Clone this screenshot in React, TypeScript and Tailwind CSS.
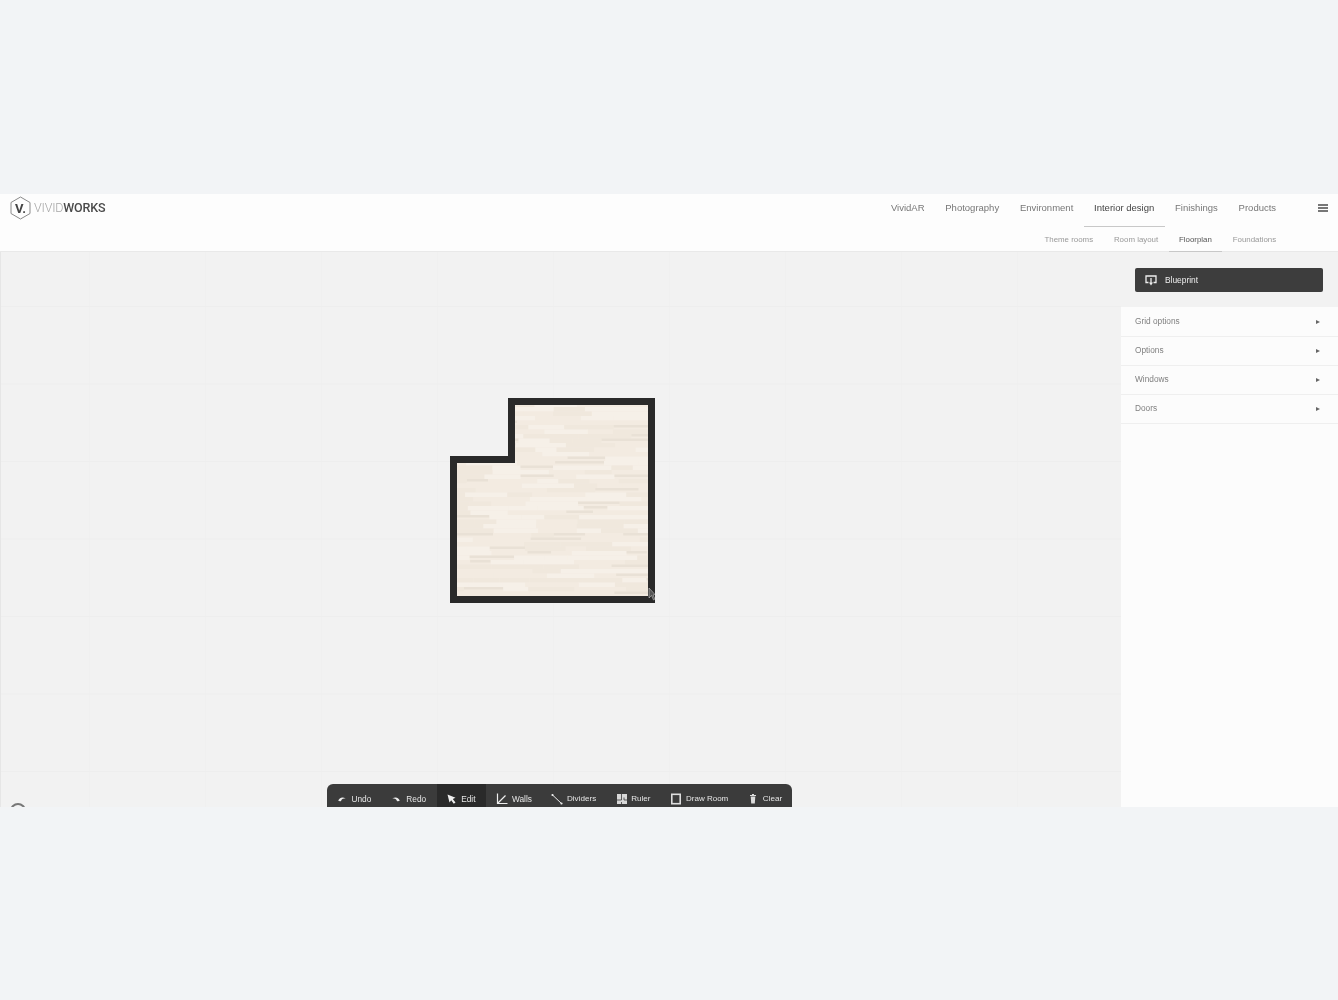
import { ReactNode } from "react";

const navItems = ["VividAR", "Photography", "Environment", "Interior design", "Finishings", "Products"];
const subItems = ["Theme rooms", "Room layout", "Floorplan", "Foundations"];
const panels = ["Grid options", "Options", "Windows", "Doors"];

function Logo() {
  return (
    <div className="flex items-center gap-[3px]">
      <svg width="21" height="24" viewBox="0 0 21 24">
        <path d="M10.5 1 L20 6.5 V17.5 L10.5 23 L1 17.5 V6.5 Z" fill="none" stroke="#8a8a8a" strokeWidth="1" strokeLinejoin="round" />
        <text x="10.5" y="17" textAnchor="middle" fontSize="13" fontWeight="700" fill="#444" fontFamily="Roboto, sans-serif">V.</text>
      </svg>
      <span className="text-[12.5px] tracking-[-0.2px] font-['Roboto',sans-serif] leading-none">
        <span className="font-light text-[#a5a5a5]">VIVID</span>
        <span className="font-medium text-[#4a4a4a]">WORKS</span>
      </span>
    </div>
  );
}

function Header() {
  return (
    <div className="h-[58px] shrink-0 bg-[#fdfdfd] border-b border-[#e9e9e9] flex flex-col">
      <div className="h-[33px] flex items-start justify-between pl-[10px] pr-[10px]">
        <div className="pt-[2px]"><Logo /></div>
        <div className="flex items-start">
          <div className="flex mr-[31.5px]">
            {navItems.map((item) => (
              <div
                key={item}
                className={
                  "h-[33px] px-[10.4px] pt-[8px] text-[9.5px] leading-[12px] border-b " +
                  (item === "Interior design" ? "text-[#444] border-[#c8c8c8]" : "text-[#777] border-transparent")
                }
              >
                {item}
              </div>
            ))}
          </div>
          <div className="mt-[10px] w-[10px] flex flex-col gap-[1.5px]">
            <div className="h-[1.5px] bg-[#777]" />
            <div className="h-[1.5px] bg-[#777]" />
            <div className="h-[1.5px] bg-[#777]" />
          </div>
        </div>
      </div>
      <div className="flex justify-end pr-[51.5px]">
        {subItems.map((item) => (
          <div
            key={item}
            className={
              "h-[25px] px-[10.4px] pt-[7px] text-[7.9px] leading-[11px] border-b " +
              (item === "Floorplan" ? "text-[#555] border-[#c8c8c8]" : "text-[#999] border-transparent")
            }
          >
            {item}
          </div>
        ))}
      </div>
    </div>
  );
}

function FloorPlan() {
  // streaks come from a small fixed sequence so the picture stays the same on every load
  const streaks: { x: number; y: number; w: number; h: number; c: string }[] = [];
  let seed = 7;
  const next = () => {
    seed = (seed * 9301 + 49297) % 233280;
    return seed / 233280;
  };
  for (let y = 0; y < 205; y += 4.5) {
    let x = -next() * 30;
    while (x < 205) {
      const w = 20 + next() * 40;
      const r = next();
      const c = r < 0.14 ? "#e9e1d6" : r < 0.4 ? "#f0e8dd" : r < 0.7 ? "#f6f0e8" : "#f3ebe1";
      streaks.push({ x, y, w, h: r < 0.14 ? 2.5 : 4.5, c });
      x += w;
    }
  }
  const outline = "M58 0 H205 V205 H0 V58 H58 Z";
  return (
    <svg width="205" height="205" viewBox="0 0 205 205" className="absolute left-[449px] top-[146px]">
      <defs>
        <clipPath id="room">
          <path d={outline} />
        </clipPath>
      </defs>
      <g clipPath="url(#room)">
        <rect width="205" height="205" fill="#f3ebe1" />
        {streaks.map((p, i) => (
          <rect key={i} x={p.x} y={p.y} width={p.w} height={p.h} fill={p.c} />
        ))}
      </g>
      <path d="M61.5 3.5 H201.5 V201.5 H3.5 V61.5 H61.5 Z" fill="none" stroke="#2a2a2a" strokeWidth="7" strokeLinejoin="miter" />
      <path d="M199 190 L199 200 L201.5 197.5 L203.5 202 L205 201 L203 197 L205 196.5 Z" fill="#555" stroke="#ddd" strokeWidth="0.5" />
    </svg>
  );
}

function ToolIcon({ children, w = 12 }: { children: ReactNode; w?: number }) {
  return (
    <svg width={w} height="12" viewBox={`0 0 ${w} 12`} fill="none" stroke="#eee" strokeWidth="1.2" className="shrink-0">
      {children}
    </svg>
  );
}

const tools: { label: string; cls: string; icon: ReactNode }[] = [
  {
    label: "Undo",
    cls: "gap-[6px] px-[10.5px] text-[8.3px]",
    icon: (
      <ToolIcon w={8}>
        <path d="M0.3 8 C1 4.5 5 3.5 7.7 5.8 C5 5.2 3.6 6 3 8.2 Z" fill="#eee" stroke="none" />
      </ToolIcon>
    ),
  },
  {
    label: "Redo",
    cls: "gap-[6px] px-[10.5px] text-[8.3px]",
    icon: (
      <ToolIcon w={8}>
        <path d="M7.7 8 C7 4.5 3 3.5 0.3 5.8 C3 5.2 4.4 6 5 8.2 Z" fill="#eee" stroke="none" />
      </ToolIcon>
    ),
  },
  {
    label: "Edit",
    cls: "gap-[5px] px-[10.5px] text-[8.3px] bg-[#2a2a2a]",
    icon: (
      <ToolIcon w={9}>
        <path d="M0.5 1.5 L8.5 4.8 L5.8 6 L8.5 9.5 L6.8 10.8 L4.2 7.2 L2.5 9.5 Z" fill="#eee" stroke="none" />
      </ToolIcon>
    ),
  },
  {
    label: "Walls",
    cls: "gap-[4px] pl-[10px] pr-[9px] text-[8.3px]",
    icon: (
      <ToolIcon>
        <path d="M1.5 0.5 V10.5 H11.5 M1.5 10.5 L9.5 2.5" strokeWidth="1.2" />
      </ToolIcon>
    ),
  },
  {
    label: "Dividers",
    cls: "gap-[4px] pl-[10px] pr-[10.5px] text-[8.1px]",
    icon: (
      <ToolIcon>
        <path d="M1 1.5 L11 11" strokeWidth="1" />
        <circle cx="1.5" cy="2" r="1.1" fill="#eee" stroke="none" />
        <circle cx="10.5" cy="10.5" r="1.1" fill="#eee" stroke="none" />
      </ToolIcon>
    ),
  },
  {
    label: "Ruler",
    cls: "gap-[4px] pl-[10.5px] pr-[10px] text-[8.1px]",
    icon: (
      <ToolIcon w={10}>
        <path d="M0 1 H10 V11 H0 Z" fill="#d8d8d8" stroke="none" />
        <path d="M4.5 1 V7 H0 M4.5 9 V11 M7 7 H10 M7 4.5 V7" stroke="#3b3b3b" strokeWidth="0.8" />
      </ToolIcon>
    ),
  },
  {
    label: "Draw Room",
    cls: "gap-[5px] pl-[10.5px] pr-[10.5px] text-[8px]",
    icon: (
      <ToolIcon w={10}>
        <rect x="0.8" y="1.3" width="8.4" height="9.4" strokeWidth="1.6" stroke="#ddd" />
      </ToolIcon>
    ),
  },
  {
    label: "Clear",
    cls: "gap-[7px] pl-[11px] pr-[10px] text-[8.1px]",
    icon: (
      <ToolIcon w={6}>
        <path d="M0 2 H6 V3 H0 Z M2 1 H4 V2 H2 Z M0.7 3.5 H5.3 L4.8 10.5 H1.2 Z" fill="#ddd" stroke="none" />
      </ToolIcon>
    ),
  },
];

function Toolbar() {
  return (
    <div className="absolute left-[326px] top-[532px] w-[465px] h-[23px] bg-[#3b3b3b] rounded-t-[6px] flex overflow-hidden">
      {tools.map((t) => (
        <div key={t.label} className={"h-[23px] pt-[7px] flex items-center whitespace-nowrap text-[#e6e6e6] " + t.cls}>
          {t.icon}
          <span>{t.label}</span>
        </div>
      ))}
    </div>
  );
}

function Sidebar() {
  return (
    <div className="w-[217px] shrink-0 flex flex-col">
      <div className="h-[55px] shrink-0 pt-[16px] pl-[14px] pr-[15px]">
        <div className="h-[24px] bg-[#3d3d3d] rounded-[2px] flex items-center gap-[8px] pl-[10px] text-[8.4px] text-[#eee]">
          <svg width="12" height="11" viewBox="0 0 12 11" fill="none" stroke="#eee" strokeWidth="1.3">
            <path d="M3.5 7.5 H1 V1 H11 V7.5 H8.5" />
            <path d="M6 3 V9" />
            <path d="M4 7.5 H8 L6 10.5 Z" fill="#eee" stroke="none" />
          </svg>
          Blueprint
        </div>
      </div>
      <div className="flex-1 bg-[#fcfcfc] pt-[1px]">
        {panels.map((p) => (
          <div key={p} className="h-[29px] pb-[1px] border-b border-[#efefef] flex items-center justify-between pl-[14px] pr-[18px] text-[8.3px] text-[#808080]">
            {p}
            <div className="w-0 h-0 border-y-[2.5px] border-y-transparent border-l-[4px] border-l-[#666]" />
          </div>
        ))}
      </div>
    </div>
  );
}

export default function App() {
  return (
    <div className="min-h-[1000px] bg-[#f2f4f6] font-['Liberation_Sans',Arial,sans-serif]">
      <div className="h-[194px]" />
      <div className="h-[613px] flex flex-col overflow-hidden blur-[0.4px]">
        <Header />
        <div className="flex-1 flex bg-[#f2f2f2]">
          <div className="flex-1 relative overflow-hidden border-l border-[#e6e6e6] bg-[linear-gradient(#eeeeee_1px,transparent_1px),linear-gradient(90deg,#f0f0f0_1px,transparent_1px)] bg-[size:116px_77.5px] bg-[position:88px_54px]">
            <FloorPlan />
            <Toolbar />
            <div className="absolute left-[9px] top-[551px] w-[16px] h-[16px] rounded-full border-2 border-[#777]" />
          </div>
          <Sidebar />
        </div>
      </div>
    </div>
  );
}
